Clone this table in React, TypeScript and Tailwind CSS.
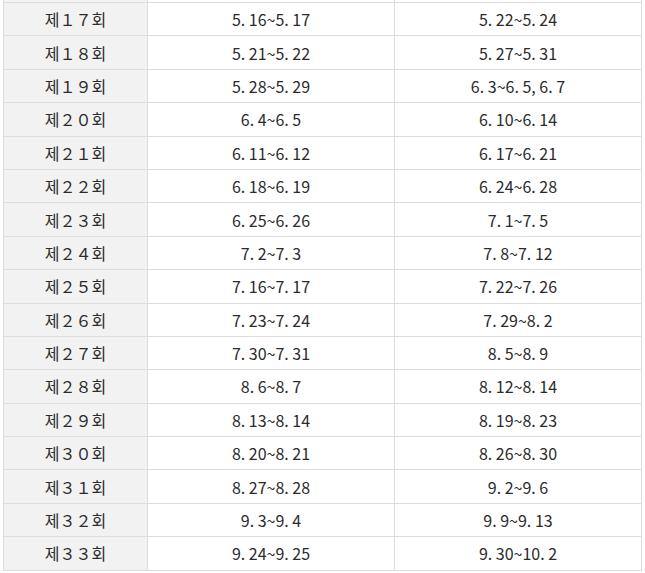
import React from "react";

const rows: [string, string, string][] = [
  ["제１７회", "5. 16~5. 17", "5. 22~5. 24"],
  ["제１８회", "5. 21~5. 22", "5. 27~5. 31"],
  ["제１９회", "5. 28~5. 29", "6. 3~6. 5, 6. 7"],
  ["제２０회", "6. 4~6. 5", "6. 10~6. 14"],
  ["제２１회", "6. 11~6. 12", "6. 17~6. 21"],
  ["제２２회", "6. 18~6. 19", "6. 24~6. 28"],
  ["제２３회", "6. 25~6. 26", "7. 1~7. 5"],
  ["제２４회", "7. 2~7. 3", "7. 8~7. 12"],
  ["제２５회", "7. 16~7. 17", "7. 22~7. 26"],
  ["제２６회", "7. 23~7. 24", "7. 29~8. 2"],
  ["제２７회", "7. 30~7. 31", "8. 5~8. 9"],
  ["제２８회", "8. 6~8. 7", "8. 12~8. 14"],
  ["제２９회", "8. 13~8. 14", "8. 19~8. 23"],
  ["제３０회", "8. 20~8. 21", "8. 26~8. 30"],
  ["제３１회", "8. 27~8. 28", "9. 2~9. 6"],
  ["제３２회", "9. 3~9. 4", "9. 9~9. 13"],
  ["제３３회", "9. 24~9. 25", "9. 30~10. 2"],
];

export default function App() {
  return (
    <div
      className="w-[645px] h-[573px] bg-white overflow-hidden pl-[3px]"
      style={{ fontFamily: '"Noto Sans CJK KR", "Noto Sans", sans-serif' }}
    >
      <div className="w-[639px] border-l border-[#dcdcdc] text-[16px] text-[#2b2b2b]">
        <div className="grid grid-cols-[144px_247px_247px] h-[3px]">
          <div className="bg-[#f2f2f2] border-r border-b border-[#dcdcdc]" />
          <div className="border-r border-b border-[#dcdcdc]" />
          <div className="border-r border-b border-[#dcdcdc]" />
        </div>
        {rows.map((r, i) => (
          <div key={i} className="grid grid-cols-[144px_247px_247px] h-[33.4px]">
            <div className="bg-[#f2f2f2] border-r border-b border-[#dcdcdc] flex items-center justify-center">
              {r[0]}
            </div>
            <div className="border-r border-b border-[#dcdcdc] flex items-center justify-center">
              {r[1]}
            </div>
            <div className="border-r border-b border-[#dcdcdc] flex items-center justify-center">
              {r[2]}
            </div>
          </div>
        ))}
      </div>
    </div>
  );
}
